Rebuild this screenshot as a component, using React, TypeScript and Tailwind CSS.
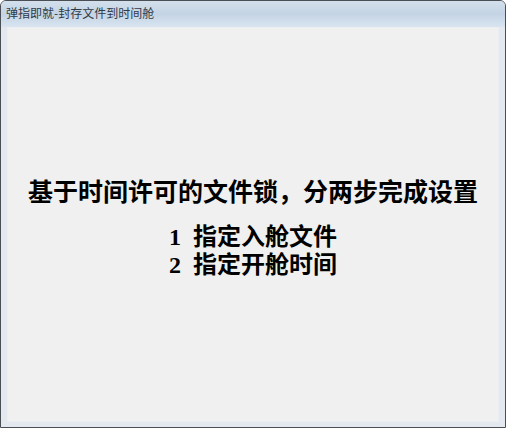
const STEPS = [
  { n: "1", text: "指定入舱文件" },
  { n: "2", text: "指定开舱时间" },
];

export default function App() {
  return (
    <div className="flex h-[428px] w-[506px] flex-col rounded-t-[6px] border border-[#4a4f55] bg-[#e3e9ef]">
      <div className="flex h-[26px] items-center rounded-t-[5px] bg-gradient-to-b from-[#d3dfeb] via-[#c4d4e5] to-[#d9e4f0] px-[5px] pb-[2px]">
        <span
          className="text-[12px] leading-none text-[#2f3a47]"
          style={{ fontFamily: '"Noto Sans CJK SC", sans-serif' }}
        >
          弹指即就-封存文件到时间舱
        </span>
      </div>
      <div className="flex flex-1 px-[6px] pb-[5px]">
        <div className="flex flex-1 flex-col items-center border border-[#ebeff3] bg-[#f0f0f0] pt-[147px]">
          <h1
            className="text-[25px] leading-[30px] font-bold text-black"
            style={{ fontFamily: '"Noto Sans CJK SC", sans-serif' }}
          >
            基于时间许可的文件锁，分两步完成设置
          </h1>
          <div
            className="mt-[17px] flex flex-col text-[24px] leading-[25px] font-bold text-black"
            style={{ fontFamily: '"Noto Sans CJK SC", sans-serif' }}
          >
            {STEPS.map((s) => (
              <p key={s.n} className="flex items-baseline">
                <span
                  className="w-[24px]"
                  style={{ fontFamily: '"Liberation Serif", serif' }}
                >
                  {s.n}
                </span>
                <span>{s.text}</span>
              </p>
            ))}
          </div>
        </div>
      </div>
    </div>
  );
}
